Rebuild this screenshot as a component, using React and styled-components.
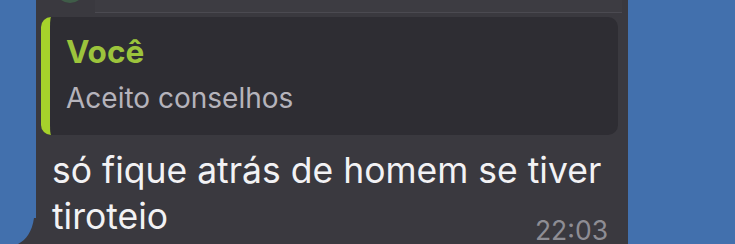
import styled, { createGlobalStyle } from "styled-components";

const GlobalStyle = createGlobalStyle`
  html, body {
    margin: 0;
    padding: 0;
    background: #4270ad;
  }
  body {
    font-family: Inter, "Noto Sans", "Liberation Sans", sans-serif;
    -webkit-font-smoothing: antialiased;
  }
`;

const Page = styled.div`
  width: 735px;
  height: 244px;
  overflow: hidden;
  background: #4270ad;
`;

const Bubble = styled.div`
  position: relative;
  margin-left: 36px;
  width: 592px;
  height: 250px;
  background: #3a393f;
`;

const TopStrip = styled.div`
  height: 12px;
  display: flex;
  background: #3d3c42;
  border-bottom: 1px solid #4b4a51;
  margin-left: 59px;
  margin-right: 6px;
`;

const Avatar = styled.div`
  width: 30px;
  height: 30px;
  margin: -27px 0 0 -40px;
  border-radius: 50%;
  background: #3f5c48;
`;

const Quote = styled.div`
  margin: 4px 10px 0 5px;
  height: 118px;
  box-sizing: border-box;
  padding: 18px 16px 0;
  background: #2e2d33;
  border-left: 9px solid #a6d22b;
  border-radius: 10px;
`;

const QuoteName = styled.div`
  font-size: 31.5px;
  line-height: 34px;
  font-weight: 700;
  color: #9cc43c;
`;

const QuoteText = styled.div`
  margin-top: 13px;
  font-size: 28px;
  line-height: 32px;
  color: #b5b3bb;
`;

const Body = styled.div`
  display: grid;
  grid-template-columns: 1fr auto;
  padding: 13px 20px 0 16px;
`;

const Text = styled.div`
  grid-area: 1 / 1 / 2 / 3;
  white-space: nowrap;
  font-size: 35.5px;
  line-height: 46px;
  color: #f2f2f4;
`;

const Time = styled.span`
  grid-area: 1 / 2 / 2 / 3;
  align-self: end;
  margin-bottom: -4px;
  font-size: 26.5px;
  line-height: 28px;
  color: #8e8d94;
`;

const Tail = styled.svg`
  position: absolute;
  left: -18px;
  bottom: 6px;
`;

export default function App() {
  return (
    <>
      <GlobalStyle />
      <Page>
        <Bubble>
          <TopStrip>
            <Avatar />
          </TopStrip>
          <Quote>
            <QuoteName>Você</QuoteName>
            <QuoteText>Aceito conselhos</QuoteText>
          </Quote>
          <Body>
            <Text>
              só fique atrás de homem se tiver
              <br />
              tiroteio
            </Text>
            <Time>22:03</Time>
          </Body>
          <Tail width="20" height="26" viewBox="0 0 20 26">
            <path d="M20 0 L20 26 L0 26 C8 22 14 14 16 0 Z" fill="#3a393f" />
          </Tail>
        </Bubble>
      </Page>
    </>
  );
}
